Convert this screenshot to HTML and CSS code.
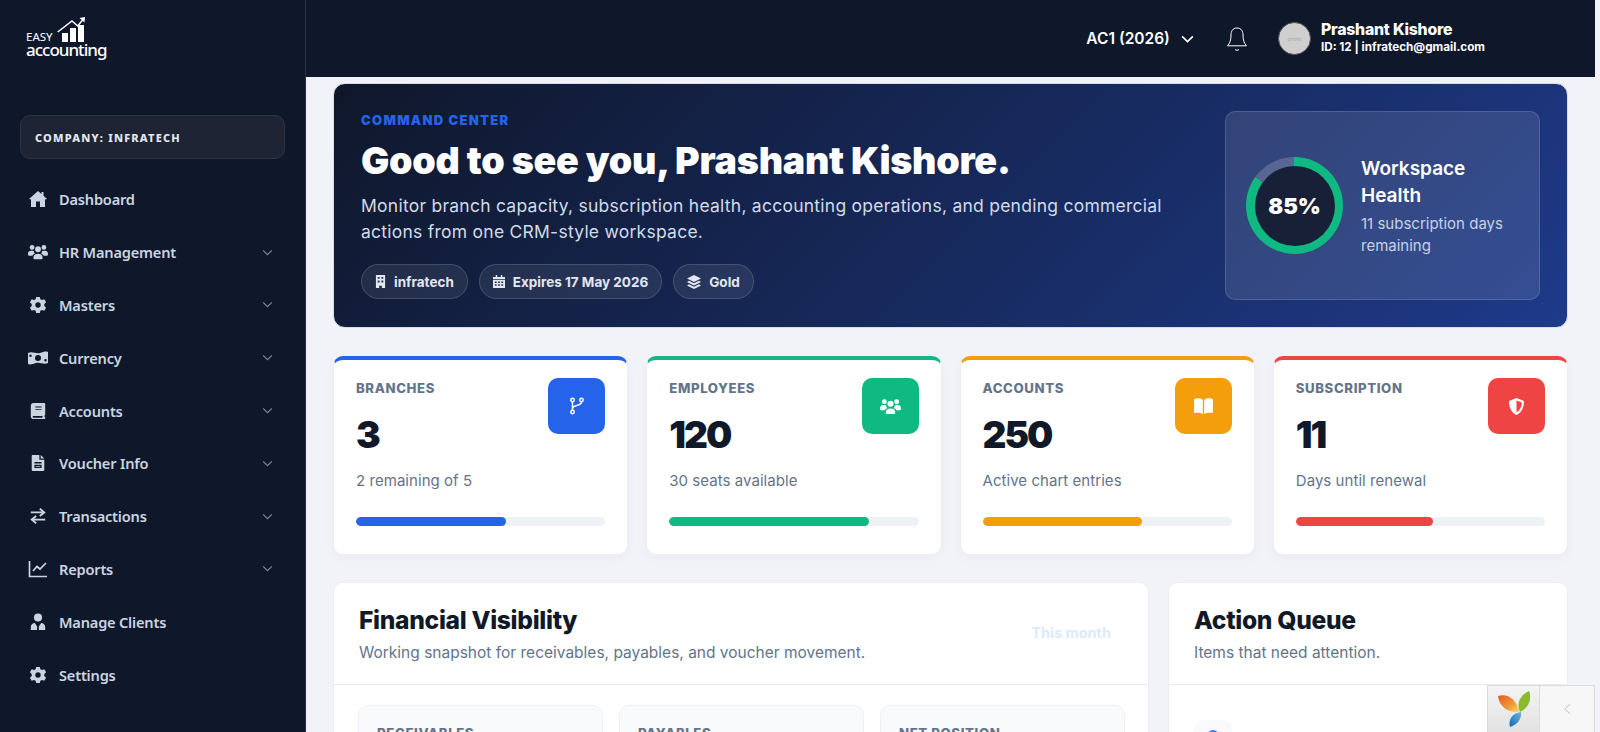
FILE: index.html
```html
<!DOCTYPE html>
<html lang="en">
<head>
    <meta charset="UTF-8">
    <title>Easy Accounting - Dashboard</title>
    <link rel="stylesheet" href="styles.css">
</head>
<body>
    <!-- Sidebar -->
    <aside class="sidebar">
        <div class="brand">
            <div class="brand-top">
                <span class="brand-easy">EASY</span>
                <svg class="brand-mark" viewBox="0 0 30 25" width="30" height="25">
                    <path d="M1.7 15 L16 4 L21.7 9 L27 2.5" fill="none" stroke="#fff" stroke-width="1.5"/>
                    <path d="M23.5 1 L29 0 L28.5 5.5 Z" fill="#fff"/>
                    <rect x="6" y="16" width="6" height="9" fill="#fff"/>
                    <rect x="14" y="11" width="6" height="14" fill="#fff"/>
                    <rect x="22" y="8" width="6" height="17" fill="#fff"/>
                </svg>
            </div>
            <div class="brand-name">accounting</div>
        </div>
        <div class="company-box">COMPANY: INFRATECH</div>
        <nav class="side-nav">
            <a class="side-link"><svg class="side-icon" viewBox="0 0 20 18"><path d="M10 1 L1 9 L3 9.5 V17 H8 V11.5 H12 V17 H17 V9.5 L19 9 L15.5 5.8 V2 H13.5 V4 Z"/></svg><span>Dashboard</span></a>
            <a class="side-link"><svg class="side-icon" viewBox="0 0 22 18"><circle cx="4.5" cy="4" r="2.6"/><circle cx="17.5" cy="4" r="2.6"/><circle cx="11" cy="6" r="3.2"/><path d="M0 11 C0 8 2 7.5 5 7.5 L6.5 8 C6.5 9.5 7 10 7.5 10.8 C5.5 11.5 5 12 5 13 H1 C.5 13 0 12.5 0 11 Z"/><path d="M22 11 C22 8 20 7.5 17 7.5 L15.5 8 C15.5 9.5 15 10 14.5 10.8 C16.5 11.5 17 12 17 13 H21 C21.5 13 22 12.5 22 11 Z"/><path d="M6 15 C6 12.5 8 11 11 11 C14 11 16 12.5 16 15 V16 C16 16.6 15.6 17 15 17 H7 C6.4 17 6 16.6 6 16 Z"/></svg><span>HR Management</span><svg class="side-caret" viewBox="0 0 12 8"><path d="M1 1.5 L6 6.5 L11 1.5"/></svg></a>
            <a class="side-link"><svg class="side-icon" viewBox="0 0 20 20"><path fill-rule="evenodd" d="M8 1 H12 L12.6 3.6 L14.5 4.5 L17 3.5 L19 7 L17 8.8 V11.2 L19 13 L17 16.5 L14.5 15.5 L12.6 16.4 L12 19 H8 L7.4 16.4 L5.5 15.5 L3 16.5 L1 13 L3 11.2 V8.8 L1 7 L3 3.5 L5.5 4.5 L7.4 3.6 Z M10 7 A3 3 0 1 0 10 13 A3 3 0 1 0 10 7 Z"/></svg><span>Masters</span><svg class="side-caret" viewBox="0 0 12 8"><path d="M1 1.5 L6 6.5 L11 1.5"/></svg></a>
            <a class="side-link"><svg class="side-icon" viewBox="0 0 20 16"><path fill-rule="evenodd" d="M0 3 C4 1 8 4 12 3 C15 2 18 1 20 2 V13 C16 15 12 12 8 13 C5 14 2 15 0 14 Z M10 5 A3 3 0 1 0 10 11 A3 3 0 1 0 10 5 Z M2.5 4.5 A1.2 1.2 0 1 0 2.5 7 A1.2 1.2 0 1 0 2.5 4.5 Z M17.5 9 A1.2 1.2 0 1 0 17.5 11.5 A1.2 1.2 0 1 0 17.5 9 Z"/></svg><span>Currency</span><svg class="side-caret" viewBox="0 0 12 8"><path d="M1 1.5 L6 6.5 L11 1.5"/></svg></a>
            <a class="side-link"><svg class="side-icon" viewBox="0 0 18 20"><path fill-rule="evenodd" d="M4 1 H16 C16.6 1 17 1.4 17 2 V14 C17 14.5 16.7 14.9 16.3 15 V17 H17 V19 H4 C2.3 19 1 17.7 1 16 V4 C1 2.3 2.3 1 4 1 Z M6 5 V6 H13 V5 Z M6 8 V9 H13 V8 Z M4 15.5 C3.4 15.5 3 15.9 3 16.5 C3 17.1 3.4 17.5 4 17.5 H14 V15.5 Z"/></svg><span>Accounts</span><svg class="side-caret" viewBox="0 0 12 8"><path d="M1 1.5 L6 6.5 L11 1.5"/></svg></a>
            <a class="side-link"><svg class="side-icon" viewBox="0 0 16 20"><path fill-rule="evenodd" d="M2 1 H9.5 V6.5 H15 V17.5 C15 18.4 14.4 19 13.5 19 H2.5 C1.6 19 1 18.4 1 17.5 V2.5 C1 1.6 1.5 1 2 1 Z M11 1 L15 5 H11 Z M4 9 V10.5 H12 V9 Z M4 12 V15.5 H12 V12 Z M5.5 13.2 H10.5 V14.3 H5.5 Z"/></svg><span>Voucher Info</span><svg class="side-caret" viewBox="0 0 12 8"><path d="M1 1.5 L6 6.5 L11 1.5"/></svg></a>
            <a class="side-link"><svg class="side-icon" viewBox="0 0 20 20"><path d="M2 6 H15 M12 2 L17 6 L12 10 M18 14 H4 M8 10 L3 14 L8 18" fill="none" stroke="currentColor" stroke-width="2"/></svg><span>Transactions</span><svg class="side-caret" viewBox="0 0 12 8"><path d="M1 1.5 L6 6.5 L11 1.5"/></svg></a>
            <a class="side-link"><svg class="side-icon" viewBox="0 0 20 18"><path d="M1.5 1 V16.5 H19 M5 11 L9 6.5 L12 9 L18 3" fill="none" stroke="currentColor" stroke-width="1.7"/></svg><span>Reports</span><svg class="side-caret" viewBox="0 0 12 8"><path d="M1 1.5 L6 6.5 L11 1.5"/></svg></a>
            <a class="side-link"><svg class="side-icon" viewBox="0 0 18 20"><circle cx="9" cy="5" r="4.5"/><path d="M1 19 V15.5 C1 13 3 11 5.5 11 L8 15 V19 Z M17 19 V15.5 C17 13 15 11 12.5 11 L10 15 V19 Z"/></svg><span>Manage Clients</span></a>
            <a class="side-link"><svg class="side-icon" viewBox="0 0 20 20"><path fill-rule="evenodd" d="M8 1 H12 L12.6 3.6 L14.5 4.5 L17 3.5 L19 7 L17 8.8 V11.2 L19 13 L17 16.5 L14.5 15.5 L12.6 16.4 L12 19 H8 L7.4 16.4 L5.5 15.5 L3 16.5 L1 13 L3 11.2 V8.8 L1 7 L3 3.5 L5.5 4.5 L7.4 3.6 Z M10 7 A3 3 0 1 0 10 13 A3 3 0 1 0 10 7 Z"/></svg><span>Settings</span></a>
        </nav>
    </aside>

    <div class="main">
        <!-- Top bar -->
        <header class="topbar">
            <div class="year-select">AC1 (2026)
                <svg viewBox="0 0 14 9" width="13" height="8"><path d="M1 1.5 L7 7.5 L13 1.5" fill="none" stroke="#fff" stroke-width="1.8"/></svg>
            </div>
            <svg class="bell" viewBox="0 0 22 26" width="22" height="26"><path d="M11 2 C6.5 2 5 5.5 5 9 C5 14 4 17 1.5 19.8 H20.5 C18 17 17 14 17 9 C17 5.5 15.5 2 11 2 Z M9 23.5 C10 24.5 12 24.5 13 23.5" fill="none" stroke="#fff" stroke-width="1"/></svg>
            <div class="user-box">
                <div class="avatar">photo</div>
                <div>
                    <div class="user-name">Prashant Kishore</div>
                    <div class="user-meta">ID: 12 | infratech@gmail.com</div>
                </div>
            </div>
        </header>

        <div class="content">
            <!-- Hero -->
            <section class="hero">
                <div class="hero-text">
                    <div class="hero-kicker">COMMAND CENTER</div>
                    <h1 class="hero-title">Good to see you, Prashant Kishore.</h1>
                    <p class="hero-desc">Monitor branch capacity, subscription health, accounting operations, and pending commercial actions from one CRM-style workspace.</p>
                    <div class="hero-tags">
                        <span class="hero-tag"><svg viewBox="0 0 12 14" width="11" height="13"><path fill-rule="evenodd" fill="#e2e8f0" d="M1 0 H11 V14 H7.5 V11.5 H4.5 V14 H1 Z M3 2 V4 H5 V2 Z M7 2 V4 H9 V2 Z M3 6 V8 H5 V6 Z M7 6 V8 H9 V6 Z"/></svg>infratech</span>
                        <span class="hero-tag"><svg viewBox="0 0 13 14" width="12" height="13"><path fill-rule="evenodd" fill="#e2e8f0" d="M3 0 H4.5 V2 H8.5 V0 H10 V2 H13 V4.5 H0 V2 H3 Z M0 5.5 H13 V14 H0 Z M2 7 V8.5 H4 V7 Z M5.5 7 V8.5 H7.5 V7 Z M9 7 V8.5 H11 V7 Z M2 10 V11.5 H4 V10 Z M5.5 10 V11.5 H7.5 V10 Z M9 10 V11.5 H11 V10 Z"/></svg>Expires 17 May 2026</span>
                        <span class="hero-tag"><svg viewBox="0 0 14 14" width="14" height="14"><path fill="#e2e8f0" d="M7 0 L14 3.5 L7 7 L0 3.5 Z M2 5.8 L7 8.3 L12 5.8 L14 7 L7 10.5 L0 7 Z M2 9.3 L7 11.8 L12 9.3 L14 10.5 L7 14 L0 10.5 Z"/></svg>Gold</span>
                    </div>
                </div>
                <div class="health-card">
                    <div class="health-ring"><div class="health-inner">85%</div></div>
                    <div>
                        <div class="health-title">Workspace Health</div>
                        <div class="health-sub">11 subscription days remaining</div>
                    </div>
                </div>
            </section>

            <!-- Stat cards -->
            <section class="stats">
                <div class="stat-card blue">
                    <div class="stat-head">
                        <div>
                            <div class="stat-label">BRANCHES</div>
                            <div class="stat-value">3</div>
                        </div>
                        <div class="stat-icon"><svg viewBox="0 0 14 18" width="14" height="18"><g fill="none" stroke="#fff" stroke-width="1.5"><circle cx="2.5" cy="3" r="1.7"/><circle cx="11.5" cy="3" r="1.7"/><circle cx="2.5" cy="15" r="1.7"/><path d="M2.5 5 V13 M11.5 5 C11.5 9 3 8 2.5 11"/></g></svg></div>
                    </div>
                    <div class="stat-note">2 remaining of 5</div>
                    <div class="stat-bar"><div class="stat-fill" style="width: 60%"></div></div>
                </div>
                <div class="stat-card green">
                    <div class="stat-head">
                        <div>
                            <div class="stat-label">EMPLOYEES</div>
                            <div class="stat-value">120</div>
                        </div>
                        <div class="stat-icon"><svg viewBox="0 0 22 18" width="21" height="17" fill="#fff"><circle cx="4.5" cy="4" r="2.6"/><circle cx="17.5" cy="4" r="2.6"/><circle cx="11" cy="6" r="3.2"/><path d="M0 11 C0 8 2 7.5 5 7.5 L6.5 8 C6.5 9.5 7 10 7.5 10.8 C5.5 11.5 5 12 5 13 H1 C.5 13 0 12.5 0 11 Z"/><path d="M22 11 C22 8 20 7.5 17 7.5 L15.5 8 C15.5 9.5 15 10 14.5 10.8 C16.5 11.5 17 12 17 13 H21 C21.5 13 22 12.5 22 11 Z"/><path d="M6 15 C6 12.5 8 11 11 11 C14 11 16 12.5 16 15 V16 C16 16.6 15.6 17 15 17 H7 C6.4 17 6 16.6 6 16 Z"/></svg></div>
                    </div>
                    <div class="stat-note">30 seats available</div>
                    <div class="stat-bar"><div class="stat-fill" style="width: 80%"></div></div>
                </div>
                <div class="stat-card amber">
                    <div class="stat-head">
                        <div>
                            <div class="stat-label">ACCOUNTS</div>
                            <div class="stat-value">250</div>
                        </div>
                        <div class="stat-icon"><svg viewBox="0 0 20 17" width="19" height="16" fill="#fff"><path d="M0 1 C3 0 7 0 9.3 2 V17 C7 15.5 3 15.5 0 16 Z M20 1 C17 0 13 0 10.7 2 V17 C13 15.5 17 15.5 20 16 Z"/></svg></div>
                    </div>
                    <div class="stat-note">Active chart entries</div>
                    <div class="stat-bar"><div class="stat-fill" style="width: 64%"></div></div>
                </div>
                <div class="stat-card red">
                    <div class="stat-head">
                        <div>
                            <div class="stat-label">SUBSCRIPTION</div>
                            <div class="stat-value">11</div>
                        </div>
                        <div class="stat-icon"><svg viewBox="0 0 16 18" width="15" height="17"><path fill="#fff" fill-rule="evenodd" d="M8 0 L16 3 C16 10 13.5 15.5 8 18 C2.5 15.5 0 10 0 3 Z M8 2.5 V15.3 C11.5 13.3 13.5 9.5 13.7 4.6 Z"/></svg></div>
                    </div>
                    <div class="stat-note">Days until renewal</div>
                    <div class="stat-bar"><div class="stat-fill" style="width: 55%"></div></div>
                </div>
            </section>

            <!-- Panels -->
            <section class="panels">
                <div class="panel">
                    <div class="panel-head">
                        <div>
                            <h2 class="panel-title">Financial Visibility</h2>
                            <p class="panel-sub">Working snapshot for receivables, payables, and voucher movement.</p>
                        </div>
                        <span class="panel-badge">This month</span>
                    </div>
                    <div class="finance-grid">
                        <div class="finance-card"><div class="finance-label">RECEIVABLES</div></div>
                        <div class="finance-card"><div class="finance-label">PAYABLES</div></div>
                        <div class="finance-card"><div class="finance-label">NET POSITION</div></div>
                    </div>
                </div>
                <div class="panel">
                    <div class="panel-head">
                        <div>
                            <h2 class="panel-title">Action Queue</h2>
                            <p class="panel-sub">Items that need attention.</p>
                        </div>
                    </div>
                    <div class="queue-list">
                        <div class="queue-icon"><span class="queue-dot"></span></div>
                    </div>
                </div>
            </section>
        </div>
    </div>

    <!-- Debug toolbar -->
    <div class="debug-bar">
        <div class="debug-logo">
            <svg viewBox="0 0 32 36" width="32" height="36">
                <defs>
                    <linearGradient id="yiiOrange" x1="0" y1="0" x2="1" y2="1">
                        <stop offset="0" stop-color="#e2592a"/>
                        <stop offset="0.6" stop-color="#f09a32"/>
                        <stop offset="1" stop-color="#f8dc6a"/>
                    </linearGradient>
                    <linearGradient id="yiiBlue" x1="1" y1="0" x2="0" y2="1">
                        <stop offset="0" stop-color="#6fb3dc"/>
                        <stop offset="1" stop-color="#0f6cb5"/>
                    </linearGradient>
                </defs>
                <path d="M0 5 C9 2 19 8 21 21 C11 22 1 16 0 5 Z" fill="url(#yiiOrange)"/>
                <path d="M31 0 C35 9 29 18 22 21 C18 13 22 4 31 0 Z" fill="#8bbb2d"/>
                <path d="M23 21 C24 28 19 34 12 36 C10 29 14 22 23 21 Z" fill="url(#yiiBlue)"/>
            </svg>
        </div>
        <div class="debug-toggle"><svg viewBox="0 0 8 13" width="7" height="12"><path d="M7 1 L1 6.5 L7 12" fill="none" stroke="#bbb" stroke-width="1"/></svg></div>
    </div>
</body>
</html>
```

FILE: styles.css
```css
* {
    margin: 0;
    padding: 0;
    box-sizing: border-box;
}

html, body {
    height: 100%;
    overflow: hidden;
}

body {
    display: flex;
    font-family: 'Inter', sans-serif;
    background: #f1f3f8;
    color: #111827;
}

/* Sidebar */
.sidebar {
    width: 306px;
    flex-shrink: 0;
    height: 732px;
    background: #0f172a;
    border-right: 1px solid #2a3244;
    color: #cbd5e1;
    padding: 0 20px;
    overflow: hidden;
    font-family: 'Noto Sans', sans-serif;
}

.brand {
    width: 90px;
    height: 98px;
    margin: 17px 0 0 6px;
    color: #fff;
}

.brand-top {
    display: flex;
    align-items: flex-end;
    height: 25px;
}

.brand-easy {
    font-size: 11.5px;
    line-height: 11px;
    margin-right: 3px;
}

.brand-mark {
    flex-shrink: 0;
}

.brand-name {
    font-size: 17px;
    font-weight: 500;
    line-height: 16px;
    letter-spacing: -1px;
}

.company-box {
    height: 44px;
    width: 265px;
    display: flex;
    align-items: center;
    padding-left: 14px;
    background: #1e2433;
    border: 1px solid #2b3345;
    border-radius: 10px;
    font-size: 11px;
    font-weight: 800;
    letter-spacing: 1.2px;
    color: #e2e8f0;
}

.side-nav {
    margin-top: 14px;
}

.side-link {
    display: flex;
    align-items: center;
    height: 52.8px;
    padding-left: 8px;
    font-size: 14.6px;
    font-weight: 600;
    letter-spacing: -0.2px;
    color: #cbd5e1;
}

.side-icon {
    width: 20px;
    height: 18px;
    margin-right: 11px;
    fill: currentColor;
    flex-shrink: 0;
}

.side-caret {
    width: 11px;
    height: 7px;
    margin-left: auto;
    margin-right: 12px;
    fill: none;
    stroke: #7b8494;
    stroke-width: 1.4;
}

/* Main column */
.main {
    flex: 1;
    min-width: 0;
    margin-right: 5px;
}

.topbar {
    height: 77px;
    background: #0f172a;
    display: flex;
    align-items: center;
    justify-content: flex-end;
    padding-right: 110px;
    color: #fff;
}

.year-select {
    display: flex;
    align-items: center;
    gap: 11px;
    font-size: 15.5px;
    font-weight: 600;
    margin-right: 32px;
}

.bell {
    margin-right: 30px;
}

.user-box {
    display: flex;
    align-items: center;
    gap: 10px;
}

.avatar {
    width: 33px;
    height: 33px;
    border-radius: 50%;
    background: #cfcfcf;
    border: 1px solid #555;
    color: #a8a8a8;
    font-size: 5px;
    display: flex;
    align-items: center;
    justify-content: center;
}

.user-name {
    font-size: 15.8px;
    font-weight: 800;
    line-height: 19px;
    letter-spacing: -0.2px;
    margin-top: -1px;
}

.user-meta {
    font-size: 11.7px;
    font-weight: 700;
    line-height: 17px;
}

.content {
    padding: 6px 27px 0;
}

/* Hero */
.hero {
    height: 245px;
    display: flex;
    justify-content: space-between;
    align-items: center;
    padding: 0 27px;
    border-radius: 12px;
    border: 1px solid #d7dcea;
    background: linear-gradient(135deg, #0f172a 0%, #1e3a8a 100%);
    color: #fff;
}

.hero-text {
    width: 810px;
    align-self: flex-start;
    margin-top: 28px;
}

.hero-kicker {
    font-size: 13px;
    font-weight: 900;
    letter-spacing: 1.3px;
    color: #2563eb;
    line-height: 16px;
}

.hero-title {
    font-size: 37.6px;
    font-weight: 900;
    line-height: 46px;
    letter-spacing: -0.25px;
    margin-top: 10px;
    white-space: nowrap;
}

.hero-desc {
    font-size: 17.5px;
    line-height: 25.5px;
    letter-spacing: 0.25px;
    color: #d3dbe8;
    margin-top: 9px;
}

.hero-tags {
    display: flex;
    gap: 11px;
    margin-top: 20px;
}

.hero-tag {
    display: flex;
    align-items: center;
    gap: 8px;
    height: 35px;
    padding: 0 13px;
    border-radius: 18px;
    border: 1px solid rgba(255, 255, 255, 0.14);
    background: rgba(255, 255, 255, 0.08);
    font-size: 13.5px;
    font-weight: 700;
    color: #e2e8f0;
}

.health-card {
    width: 315px;
    height: 189px;
    display: flex;
    align-items: center;
    gap: 18px;
    padding: 0 20px;
    border-radius: 10px;
    border: 1px solid rgba(255, 255, 255, 0.14);
    background: rgba(255, 255, 255, 0.11);
}

.health-ring {
    width: 97px;
    height: 97px;
    border-radius: 50%;
    flex-shrink: 0;
    display: flex;
    align-items: center;
    justify-content: center;
    background: conic-gradient(#10b981 0 85%, rgba(255, 255, 255, 0.18) 85% 100%);
}

.health-inner {
    width: 80px;
    height: 80px;
    border-radius: 50%;
    background: #172036;
    display: flex;
    align-items: center;
    justify-content: center;
    font-size: 22px;
    font-weight: 900;
}

.health-title {
    font-size: 19px;
    font-weight: 600;
    line-height: 27px;
}

.health-sub {
    font-size: 15px;
    line-height: 22px;
    color: #c6d2e8;
    margin-top: 4px;
}

/* Stat cards */
.stats {
    display: grid;
    grid-template-columns: repeat(4, minmax(0, 1fr));
    gap: 18px;
    margin-top: 28px;
}

.stat-card {
    height: 199px;
    background: #fff;
    border-radius: 10px;
    border: 1px solid #eceef4;
    border-top: 4px solid var(--accent);
    padding: 18px 22px 0;
    box-shadow: 0 4px 12px rgba(15, 23, 42, 0.03);
}

.blue { --accent: #2563eb; }
.green { --accent: #10b981; }
.amber { --accent: #f59e0b; }
.red { --accent: #ef4444; }

.stat-head {
    display: flex;
    justify-content: space-between;
    height: 84px;
}

.stat-label {
    font-size: 13.2px;
    font-weight: 800;
    letter-spacing: 0.6px;
    color: #64748b;
    line-height: 18px;
    margin-top: 1px;
}

.stat-value {
    font-size: 37px;
    font-weight: 900;
    line-height: 44px;
    color: #111827;
    margin-top: 16px;
    letter-spacing: -2px;
}

.stat-icon {
    width: 57px;
    height: 56px;
    border-radius: 10px;
    background: var(--accent);
    display: flex;
    align-items: center;
    justify-content: center;
}

.stat-note {
    font-size: 15px;
    line-height: 20px;
    letter-spacing: 0.05px;
    color: #64748b;
    margin-top: 9px;
}

.stat-bar {
    height: 9px;
    border-radius: 5px;
    background: #eef1f6;
    margin-top: 26px;
    overflow: hidden;
}

.stat-fill {
    height: 100%;
    border-radius: 5px;
    background: var(--accent);
}

/* Panels */
.panels {
    display: grid;
    grid-template-columns: 816px minmax(0, 1fr);
    gap: 19px;
    margin-top: 27px;
}

.panel {
    height: 300px;
    background: #fff;
    border-radius: 10px;
    border: 1px solid #eceef4;
}

.panel-head {
    height: 102px;
    display: flex;
    justify-content: space-between;
    align-items: flex-start;
    padding: 20px 24px 0 25px;
    border-bottom: 1px solid #e8eaf0;
}

.panel-title {
    font-size: 24.6px;
    font-weight: 800;
    line-height: 34px;
    letter-spacing: -0.3px;
}

.panel-sub {
    font-size: 15.5px;
    line-height: 22px;
    color: #64748b;
    margin-top: 5px;
}

.panel-badge {
    font-size: 14.5px;
    font-weight: 700;
    color: #dbeafe;
    margin: 21px 13px 0 0;
}

.finance-grid {
    display: grid;
    grid-template-columns: repeat(3, minmax(0, 1fr));
    gap: 16px;
    padding: 20px 23px 20px 24px;
}

.finance-card {
    height: 100px;
    background: #f8fafc;
    border: 1px solid #eef1f6;
    border-radius: 10px;
    padding: 19px 18px;
}

.finance-label {
    font-size: 13.2px;
    font-weight: 800;
    letter-spacing: 0.6px;
    color: #64748b;
}

.queue-list {
    padding: 35px 25px;
}

.queue-icon {
    width: 38px;
    height: 38px;
    border-radius: 10px;
    background: #f8fafc;
    display: flex;
    justify-content: center;
    padding-top: 10px;
}

.queue-dot {
    width: 12px;
    height: 12px;
    border-radius: 50%;
    background: #3b82f6;
}

/* Debug toolbar */
.debug-bar {
    position: fixed;
    right: 5px;
    bottom: 0;
    width: 108px;
    height: 47px;
    display: flex;
    border: 1px solid #dcdcdc;
    border-bottom: none;
    background: #f7f7f7;
}

.debug-logo {
    width: 52px;
    display: flex;
    align-items: center;
    justify-content: center;
    border-right: 1px solid #dcdcdc;
    background: linear-gradient(#f4f4f4, #e2e2e2);
}

.debug-toggle {
    flex: 1;
    display: flex;
    align-items: center;
    justify-content: center;
}
```
